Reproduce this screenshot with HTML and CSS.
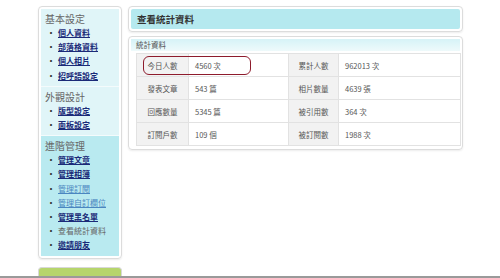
FILE: index.html
```html
<!DOCTYPE html>
<html lang="zh-Hant">
<head>
    <meta charset="UTF-8">
    <title>查看統計資料</title>
    <link rel="stylesheet" href="styles.css">
</head>
<body>
    <div class="layout">
        <aside class="side">
            <div class="side-box">
                <div class="side-group">
                    <h3>基本設定</h3>
                    <ul>
                        <li><a href="#">個人資料</a></li>
                        <li><a href="#">部落格資料</a></li>
                        <li><a href="#">個人相片</a></li>
                        <li><a href="#">招呼語設定</a></li>
                    </ul>
                </div>
                <div class="side-group">
                    <h3>外觀設計</h3>
                    <ul>
                        <li><a href="#">版型設定</a></li>
                        <li><a href="#">面板設定</a></li>
                    </ul>
                </div>
                <div class="side-group active">
                    <h3>進階管理</h3>
                    <ul>
                        <li><a href="#">管理文章</a></li>
                        <li><a href="#">管理相簿</a></li>
                        <li><a class="visited" href="#">管理訂閱</a></li>
                        <li><a class="visited" href="#">管理自訂欄位</a></li>
                        <li><a href="#">管理黑名單</a></li>
                        <li><span class="current">查看統計資料</span></li>
                        <li><a href="#">邀請朋友</a></li>
                    </ul>
                </div>
            </div>
            <div class="side-green"></div>
        </aside>

        <main class="main">
            <div class="panel">
                <div class="panel-title">查看統計資料</div>
            </div>
            <div class="panel">
                <div class="panel-sub">統計資料</div>
                <div class="stats-wrap">
                    <table class="stats">
                        <tr>
                            <th>今日人數</th><td>4560 次</td>
                            <th>累計人數</th><td>962013 次</td>
                        </tr>
                        <tr>
                            <th>發表文章</th><td>543 篇</td>
                            <th>相片數量</th><td>4639 張</td>
                        </tr>
                        <tr>
                            <th>回應數量</th><td>5345 篇</td>
                            <th>被引用數</th><td>364 次</td>
                        </tr>
                        <tr>
                            <th>訂閱戶數</th><td>109 個</td>
                            <th>被訂閱數</th><td>1988 次</td>
                        </tr>
                    </table>
                    <div class="highlight"></div>
                </div>
            </div>
        </main>
    </div>
</body>
</html>
```

FILE: styles.css
```css
* {
    box-sizing: border-box;
    margin: 0;
    padding: 0;
}

html, body {
    height: 278px;
    overflow: hidden;
}

body {
    background: #ffffff;
    font-family: "Noto Sans CJK TC", "DejaVu Sans", sans-serif;
    color: #555;
    border-bottom: 2px solid #9a9a9a;
}

.layout {
    display: flex;
    gap: 6px;
    padding: 6px 0 0 38px;
}

/* sidebar */
.side {
    width: 84px;
    display: flex;
    flex-direction: column;
    gap: 8px;
}

.side-box {
    border: 1px solid #dcdcdc;
    border-radius: 4px;
    padding: 2px;
    box-shadow: 0 1px 2px rgba(0, 0, 0, 0.08);
}

.side-group {
    background: #e0f5f8;
    padding: 3px 0 3px 4px;
    border-bottom: 1px solid #f4fbfc;
}

.side-group.active {
    background: #b9eaf0;
    border-bottom: none;
}

.side-group h3 {
    font-size: 10px;
    font-weight: normal;
    color: #666;
    line-height: 14px;
}

.side-group ul {
    list-style: none;
}

.side-group li {
    font-size: 8px;
    line-height: 14.2px;
    padding-left: 2px;
    white-space: nowrap;
}

.side-group li::before {
    content: "·";
    color: #333;
    font-weight: bold;
    margin-right: 3px;
}

.side-group a {
    color: #1b2a78;
    font-weight: bold;
    text-decoration: underline;
}

.side-group a.visited {
    color: #4a86c0;
    font-weight: normal;
}

.current {
    color: #666;
}

.side-green {
    height: 12px;
    background: #b6d56c;
    border: 1px solid #d8d8d8;
    border-bottom: none;
    border-radius: 4px 4px 0 0;
}

/* main */
.main {
    width: 335px;
    display: flex;
    flex-direction: column;
    gap: 4px;
}

.panel {
    border: 1px solid #dcdcdc;
    border-radius: 4px;
    padding: 2px;
    box-shadow: 0 1px 2px rgba(0, 0, 0, 0.08);
}

.panel-title {
    background: #b5e9ef;
    height: 20px;
    line-height: 20px;
    padding-left: 6px;
    font-size: 9.5px;
    font-weight: bold;
    color: #333;
    border-radius: 2px;
}

.panel-sub {
    background: linear-gradient(#d6f3f7, #eefafb);
    height: 12px;
    line-height: 12px;
    padding-left: 5px;
    font-size: 7.5px;
    color: #555;
}

.stats-wrap {
    position: relative;
    padding: 2px 1px 1px 5px;
}

.stats {
    width: 325px;
    border-collapse: collapse;
    font-size: 7.5px;
    color: #555;
}

.stats th,
.stats td {
    height: 23px;
    border: 1px solid #e2e2e2;
    font-weight: normal;
}

.stats th {
    background: #f2f2f2;
    width: 52px;
    text-align: center;
}

.stats td {
    background: #fff;
    text-align: left;
    padding-left: 6px;
}

.stats td:nth-child(2) {
    width: 100px;
}

.stats th:nth-child(3) {
    width: 50px;
}

.highlight {
    position: absolute;
    left: 12px;
    top: 5px;
    width: 108px;
    height: 19px;
    border: 1.5px solid #8e1b2c;
    border-radius: 6px;
}
```
